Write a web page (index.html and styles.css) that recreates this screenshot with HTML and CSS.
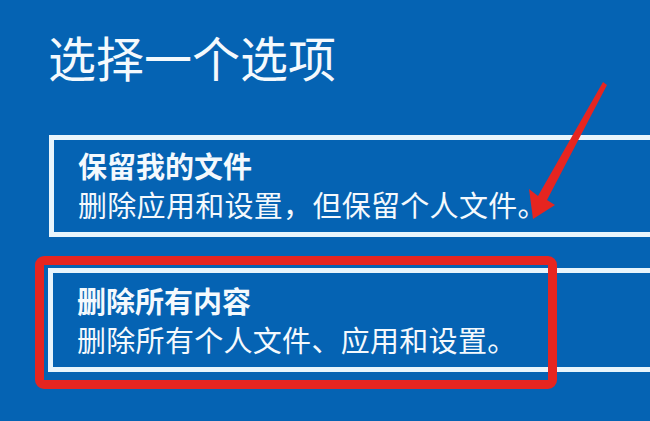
FILE: index.html
```html
<!DOCTYPE html>
<html lang="zh-CN">
<head>
<meta charset="utf-8">
<title>选择一个选项</title>
<link rel="stylesheet" href="styles.css">
</head>
<body>
<main class="screen">
  <h1 class="title">选择一个选项</h1>
  <div class="options">
    <div class="option">
      <div class="option-title">保留我的文件</div>
      <div class="option-desc">删除应用和设置，但保留个人文件。</div>
    </div>
    <div class="option option-marked">
      <div class="option-title">删除所有内容</div>
      <div class="option-desc">删除所有个人文件、应用和设置。</div>
      <div class="highlight"></div>
    </div>
  </div>
  <svg class="arrow" width="650" height="421" viewBox="0 0 650 421" aria-hidden="true">
    <polygon points="603,82 607,85 547,200 555,205 533,219 529,189 538,196" fill="#e62520"/>
  </svg>
</main>
</body>
</html>
```

FILE: styles.css
```css
html, body {
  margin: 0;
  padding: 0;
  width: 650px;
  height: 421px;
  overflow: hidden;
  background: #0563b3;
}

.screen {
  position: relative;
  width: 650px;
  height: 421px;
  box-sizing: border-box;
  padding: 28px 0 0 48px;
  font-family: "Noto Sans CJK SC", "Noto Sans", sans-serif;
  color: #f4f9fd;
  overflow: hidden;
}

.title {
  margin: 0;
  font-size: 48px;
  line-height: 56px;
  font-weight: 400;
  letter-spacing: 0;
}

.options {
  display: flex;
  flex-direction: column;
  gap: 31px;
  margin-top: 51px;
}

.option {
  position: relative;
  width: 601px;
  box-sizing: border-box;
  border: 5px solid #e9f5fc;
  border-right: none;
  padding: 6px 0 8px 24px;
  margin-left: 1px;
}

.option-marked {
  width: 602px;
  margin-left: 0;
  padding-top: 8px;
  padding-bottom: 8px;
}

.option-title {
  font-size: 29px;
  line-height: 39px;
  font-weight: 700;
}

.option-desc {
  font-size: 29px;
  line-height: 39px;
  font-weight: 400;
  letter-spacing: 0.3px;
}

.highlight {
  position: absolute;
  left: -18px;
  top: -17px;
  width: 522px;
  height: 133px;
  box-sizing: border-box;
  border: 9px solid #e62520;
  border-radius: 9px;
}

.arrow {
  position: absolute;
  left: 0;
  top: 0;
  pointer-events: none;
}
```
